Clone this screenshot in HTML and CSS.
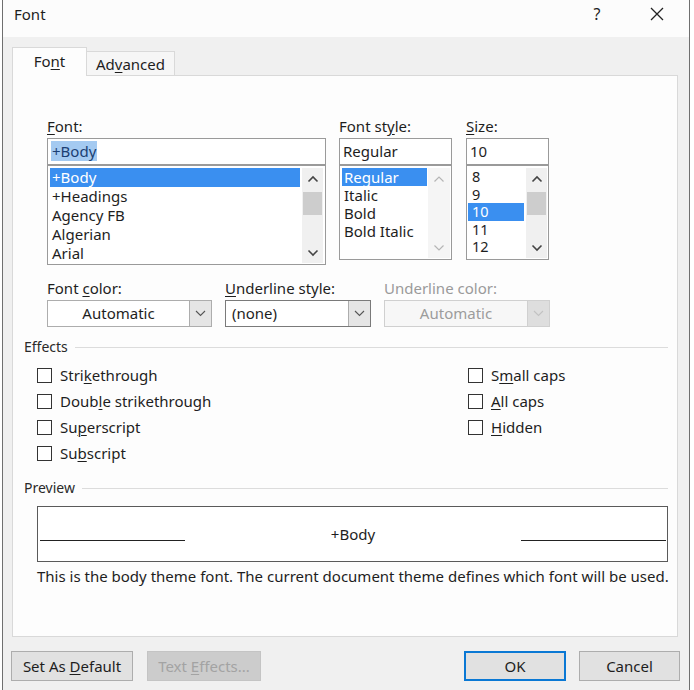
FILE: index.html
```html
<!DOCTYPE html>
<html>
<head>
<meta charset="utf-8">
<link rel="stylesheet" href="styles.css">
</head>
<body>
<div class="window">
  <div class="titlebar">
    <span class="title">Font</span>
    <span class="help">?</span>
    <span class="close"><svg width="16" height="16" viewBox="0 0 16 16"><path d="M2 2L14 14M14 2L2 14" stroke="#222" stroke-width="1.3" fill="none"/></svg></span>
  </div>
  <div class="content">
    <div class="tabs">
      <div class="tab active"><span>Fo<u>n</u>t</span></div>
      <div class="tab"><span>Ad<u>v</u>anced</span></div>
    </div>
    <div class="panel">
      <div class="row1">
        <div class="col col-font">
          <div class="label"><u>F</u>ont:</div>
          <div class="input"><span class="seltext">+Body</span></div>
          <div class="list list-font">
            <div class="items">
              <div class="item selected">+Body</div>
              <div class="item">+Headings</div>
              <div class="item">Agency FB</div>
              <div class="item">Algerian</div>
              <div class="item">Arial</div>
            </div>
            <div class="scroll">
              <div class="arrow"><svg width="12" height="8" viewBox="0 0 12 8"><path d="M1.5 6.5L6 2L10.5 6.5" stroke="#444" stroke-width="1.6" fill="none"/></svg></div>
              <div class="thumb"></div>
              <div class="spacer"></div>
              <div class="arrow"><svg width="12" height="8" viewBox="0 0 12 8"><path d="M1.5 1.5L6 6L10.5 1.5" stroke="#444" stroke-width="1.6" fill="none"/></svg></div>
            </div>
          </div>
        </div>
        <div class="col col-style">
          <div class="label">Font st<u>y</u>le:</div>
          <div class="input">Regular</div>
          <div class="list list-style">
            <div class="items">
              <div class="item selected">Regular</div>
              <div class="item">Italic</div>
              <div class="item">Bold</div>
              <div class="item">Bold Italic</div>
            </div>
            <div class="scroll light">
              <div class="arrow"><svg width="12" height="8" viewBox="0 0 12 8"><path d="M1.5 6.5L6 2L10.5 6.5" stroke="#b5b5b5" stroke-width="1.2" fill="none"/></svg></div>
              <div class="spacer"></div>
              <div class="arrow"><svg width="12" height="8" viewBox="0 0 12 8"><path d="M1.5 1.5L6 6L10.5 1.5" stroke="#b5b5b5" stroke-width="1.2" fill="none"/></svg></div>
            </div>
          </div>
        </div>
        <div class="col col-size">
          <div class="label"><u>S</u>ize:</div>
          <div class="input">10</div>
          <div class="list list-size">
            <div class="items">
              <div class="item">8</div>
              <div class="item">9</div>
              <div class="item selected">10</div>
              <div class="item">11</div>
              <div class="item">12</div>
            </div>
            <div class="scroll">
              <div class="arrow"><svg width="12" height="8" viewBox="0 0 12 8"><path d="M1.5 6.5L6 2L10.5 6.5" stroke="#444" stroke-width="1.6" fill="none"/></svg></div>
              <div class="thumb"></div>
              <div class="spacer"></div>
              <div class="arrow"><svg width="12" height="8" viewBox="0 0 12 8"><path d="M1.5 1.5L6 6L10.5 1.5" stroke="#444" stroke-width="1.6" fill="none"/></svg></div>
            </div>
          </div>
        </div>
      </div>

      <div class="row2">
        <div class="dcol dcol-color">
          <div class="label">Font <u>c</u>olor:</div>
          <div class="dropdown">
            <div class="dfield center">Automatic</div>
            <div class="dbtn"><svg width="11" height="7" viewBox="0 0 11 7"><path d="M1 1L5.5 5.5L10 1" stroke="#555" stroke-width="1.1" fill="none"/></svg></div>
          </div>
        </div>
        <div class="dcol dcol-ustyle">
          <div class="label"><u>U</u>nderline style:</div>
          <div class="dropdown dark">
            <div class="dfield">(none)</div>
            <div class="dbtn"><svg width="11" height="7" viewBox="0 0 11 7"><path d="M1 1L5.5 5.5L10 1" stroke="#555" stroke-width="1.1" fill="none"/></svg></div>
          </div>
        </div>
        <div class="dcol dcol-ucolor">
          <div class="label disabled">Underline color:</div>
          <div class="dropdown disabled">
            <div class="dfield center">Automatic</div>
            <div class="dbtn"><svg width="11" height="7" viewBox="0 0 11 7"><path d="M1 1L5.5 5.5L10 1" stroke="#c2c2c2" stroke-width="1.1" fill="none"/></svg></div>
          </div>
        </div>
      </div>

      <div class="group group-effects"><span>Effects</span><div class="gline"></div></div>
      <div class="effects">
        <div class="ecol ecol-left">
          <div class="check"><span class="box"></span><span>Stri<u>k</u>ethrough</span></div>
          <div class="check"><span class="box"></span><span>Doub<u>l</u>e strikethrough</span></div>
          <div class="check"><span class="box"></span><span>Su<u>p</u>erscript</span></div>
          <div class="check"><span class="box"></span><span>Su<u>b</u>script</span></div>
        </div>
        <div class="ecol">
          <div class="check"><span class="box"></span><span>S<u>m</u>all caps</span></div>
          <div class="check"><span class="box"></span><span><u>A</u>ll caps</span></div>
          <div class="check"><span class="box"></span><span><u>H</u>idden</span></div>
        </div>
      </div>

      <div class="group group-preview"><span>Preview</span><div class="gline"></div></div>
      <div class="preview">
        <div class="pline pline-left"></div>
        <div class="ptext">+Body</div>
        <div class="pline pline-right"></div>
      </div>
      <div class="note">This is the body theme font. The current document theme defines which font will be used.</div>
    </div>
  </div>
  <div class="buttons">
    <div class="btn btn-default"><span>Set As <u>D</u>efault</span></div>
    <div class="btn btn-effects disabled"><span>Text <u>E</u>ffects...</span></div>
    <div class="bspacer"></div>
    <div class="btn btn-ok"><span>OK</span></div>
    <div class="btn btn-cancel"><span>Cancel</span></div>
  </div>
</div>
</body>
</html>
```

FILE: styles.css
```css
* { box-sizing: border-box; }
html, body { margin: 0; padding: 0; background: #ffffff; }
body {
  font-family: "Noto Sans", "Open Sans", sans-serif;
  font-size: 15px;
  color: #1e1e1e;
  width: 694px;
  height: 690px;
  overflow: hidden;
}
u { text-decoration-thickness: 1px; text-underline-offset: 2px; }

.window {
  margin-left: 2px;
  width: 688px;
  height: 690px;
  border-left: 1px solid #6f6f6f;
  border-right: 1px solid #6f6f6f;
  background: #f0f0f0;
  display: flex;
  flex-direction: column;
}

.titlebar {
  height: 37px;
  flex: none;
  background: #fcfcfc;
  display: flex;
  align-items: flex-start;
  padding: 3px 9px 0 11px;
  line-height: 22px;
}
.title { flex: 1; }
.help { width: 40px; margin-right: 17px; text-align: center; font-size: 16px; }
.close { width: 46px; height: 22px; display: flex; align-items: center; justify-content: center; }

.content { padding: 10px 11px 0 9px; }

.tabs { display: flex; align-items: flex-end; height: 29px; margin-bottom: -1px; position: relative; z-index: 1; }
.tab {
  height: 25px;
  width: 88px;
  border: 1px solid #d9d9d9;
  border-left: none;
  background: #f6f6f6;
  display: flex;
  align-items: center;
  justify-content: center;
  line-height: 20px;
}
.tab.active {
  height: 29px;
  width: 75px;
  border-left: 1px solid #d9d9d9;
  border-bottom: none;
  background: #fdfdfd;
  padding-top: 3px;
  align-items: flex-start;
}

.panel {
  height: 562px;
  border: 1px solid #d9d9d9;
  background: #fdfdfd;
  padding: 40px 9px 0 11px;
}

.label { height: 20px; line-height: 20px; margin-bottom: 2px; white-space: nowrap; }
.label.disabled { color: #9a9a9a; }

.row1 { display: flex; }
.col-font { margin-left: 23px; width: 279px; }
.col-style { margin-left: 13px; width: 113px; }
.col-size { margin-left: 14px; width: 83px; }

.input {
  height: 27px;
  border: 1px solid #9a9a9a;
  background: #fff;
  padding-left: 3px;
  line-height: 25px;
}
.seltext { background: #a4caf1; color: #1b3f73; padding: 0 1px; }

.list {
  border: 1px solid #9a9a9a;
  background: #fff;
  display: flex;
  padding: 2px 2px 1px 2px;
}
.list-font { height: 100px; }
.list-style { height: 95px; padding: 2px 1px 1px 2px; }
.list-size { height: 95px; padding: 2px 1px 1px 1px; }

.items { flex: 1; }
.item { height: 19px; line-height: 19px; padding-left: 2px; white-space: nowrap; }
.list-style .item { height: 18px; line-height: 18px; }
.list-size .item { height: 17.6px; line-height: 17.6px; padding-left: 4px; font-size: 14.5px; }
.item.selected { background: #3a8ff0; color: #fff; }

.scroll { width: 21px; margin-left: 2px; background: #f0f0f0; display: flex; flex-direction: column; }
.list-style .scroll { width: 22px; margin-left: 1px; }
.scroll.light { background: #f5f5f5; }
.arrow { height: 21px; display: flex; align-items: center; justify-content: center; flex: none; }
.thumb { height: 23px; margin: 3px 1px 0 1px; background: #cdcdcd; flex: none; }
.spacer { flex: 1; }

.row2 { display: flex; margin-top: 13px; }
.dcol-color { margin-left: 23px; width: 165px; }
.dcol-ustyle { margin-left: 13px; width: 146px; }
.dcol-ucolor { margin-left: 13px; width: 166px; }
.dropdown {
  height: 27px;
  border: 1px solid #adadad;
  background: #fff;
  display: flex;
}
.dropdown.dark { border-color: #7a7a7a; }
.dfield { flex: 1; line-height: 25px; padding-left: 6px; }
.dfield.center { text-align: center; padding-left: 0; }
.dbtn {
  width: 22px;
  border-left: 1px solid #adadad;
  background: #e5e5e5;
  display: flex;
  align-items: center;
  justify-content: center;
}
.dropdown.disabled { background: #f7f7f7; border-color: #d0d0d0; color: #9c9c9c; }
.dropdown.disabled .dbtn { background: #dedede; border-left-color: #d0d0d0; }

.group { display: flex; align-items: center; height: 20px; line-height: 20px; color: #2a2a2a; font-size: 14px; }
.group-effects { margin-top: 10px; }
.group-preview { margin-top: 12px; }
.gline { flex: 1; height: 1px; background: #dcdcdc; margin-left: 7px; }

.effects { display: flex; margin-top: 5px; }
.ecol { display: flex; flex-direction: column; }
.ecol-left { margin-left: 13px; width: 431px; }
.check { height: 26px; display: flex; align-items: center; white-space: nowrap; }
.box { width: 15px; height: 15px; border: 1px solid #333; background: #fff; margin-right: 8px; flex: none; }

.preview {
  margin: 8px 0 0 13px;
  width: 631px;
  height: 56px;
  border: 1px solid #5a5a5a;
  background: #fff;
  display: flex;
  align-items: flex-start;
}
.pline { width: 145px; height: 34px; border-bottom: 1px solid #222; flex: none; }
.pline-left { margin-left: 2px; }
.pline-right { margin-right: 1px; }
.ptext { flex: 1; text-align: center; padding-top: 17px; line-height: 20px; }

.note { margin: 4px 0 0 13px; line-height: 20px; white-space: nowrap; }

.buttons { display: flex; padding: 14px 9px 0 8px; }
.btn {
  height: 30px;
  border: 1px solid #adadad;
  background: #e1e1e1;
  display: flex;
  align-items: center;
  justify-content: center;
  white-space: nowrap;
}
.btn-default { width: 122px; }
.btn-effects { width: 114px; margin-left: 14px; }
.btn.disabled { background: #cccccc; border-color: #c4c4c4; color: #a3a3a3; }
.bspacer { flex: 1; }
.btn-ok { width: 102px; border: 2px solid #0a78d4; }
.btn-cancel { width: 101px; margin-left: 13px; }
```
